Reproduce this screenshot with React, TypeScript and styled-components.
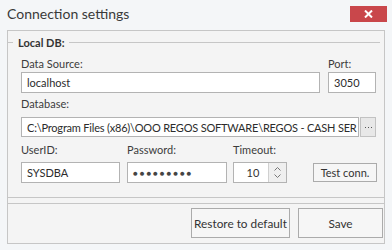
import styled, { createGlobalStyle } from "styled-components";

const GlobalStyle = createGlobalStyle`
  html, body {
    margin: 0;
    padding: 0;
    background: #f4f6f8;
  }
  body {
    font-family: Lato, "Noto Sans", sans-serif;
    font-size: 11px;
    color: #333;
  }
`;

const Window = styled.div`
  width: 392px;
  height: 250px;
  box-sizing: border-box;
  padding: 0 7px 0 7px;
  display: flex;
  flex-direction: column;
`;

const TitleBar = styled.div`
  height: 30px;
  display: flex;
  align-items: flex-start;
  justify-content: space-between;
`;

const Title = styled.div`
  font-size: 14px;
  line-height: 20px;
  margin-top: 4px;
  color: #3a3a3a;
`;

const CloseButton = styled.div`
  width: 37px;
  height: 16px;
  margin-top: 6px;
  margin-right: -2px;
  background: #c9474b;
  display: flex;
  align-items: center;
  justify-content: center;
`;

const Panel = styled.div`
  border: 1px solid #c6c6c6;
  background: #f4f4f4;
  height: 214px;
  box-sizing: border-box;
  display: flex;
  flex-direction: column;
`;

const Group = styled.div`
  border-bottom: 1px solid #c6c6c6;
  padding: 3px 7px 14px 13px;
`;

const Caption = styled.div`
  display: flex;
  align-items: center;
  height: 16px;
  margin-left: -13px;
  margin-right: -3px;
  gap: 5px;
  font-weight: 700;
  color: #333;
  &::before {
    content: "";
    width: 5px;
    height: 1px;
    background: #c6c6c6;
  }
  &::after {
    content: "";
    flex: 1;
    height: 1px;
    background: #c6c6c6;
  }
`;

const Row = styled.div<{ $top: number }>`
  display: flex;
  align-items: flex-end;
  margin-top: ${(p) => p.$top}px;
`;

const Field = styled.div<{ $w: number; $gap: number; $ml?: number }>`
  display: flex;
  flex-direction: column;
  gap: ${(p) => p.$gap}px;
  width: ${(p) => p.$w}px;
  margin-left: ${(p) => p.$ml ?? 0}px;
`;

const Label = styled.div`
  line-height: 16px;
  color: #3c3c3c;
  white-space: nowrap;
`;

const Box = styled.div<{ $h?: number; $w?: number; $tight?: boolean }>`
  height: ${(p) => p.$h ?? 21}px;
  ${(p) => (p.$w ? `width: ${p.$w}px;` : "")}
  box-sizing: border-box;
  border: 1px solid #b3b3b3;
  background: #fff;
  display: flex;
  align-items: center;
  padding-left: 5px;
  overflow: hidden;
  white-space: nowrap;
  color: #2c2c2c;
  letter-spacing: ${(p) => (p.$tight ? "-0.2px" : "normal")};
`;

const Caret = styled.span`
  display: inline-block;
  flex: none;
  width: 1px;
  height: 13px;
  background: #111;
  margin-left: 1px;
`;

const Dots = styled.span`
  font-size: 8px;
  letter-spacing: 1.9px;
  color: #444;
`;

const Ellipsis = styled.div`
  width: 16px;
  height: 20px;
  margin-left: 1px;
  box-sizing: border-box;
  border: 1px solid #c2c2c2;
  background: #e8e8e8;
  display: flex;
  align-items: center;
  justify-content: center;
  gap: 2px;
  & span {
    width: 1px;
    height: 1px;
    background: #555;
  }
`;

const Spin = styled.div`
  height: 21px;
  width: 54px;
  box-sizing: border-box;
  border: 1px solid #b3b3b3;
  background: #fff;
  display: flex;
`;

const SpinValue = styled.div`
  flex: 1;
  display: flex;
  align-items: center;
  justify-content: center;
  padding-left: 4px;
`;

const SpinButtons = styled.div`
  width: 17px;
  border-left: 1px solid #d0d0d0;
  background: #efefef;
  display: flex;
  flex-direction: column;
  align-items: center;
  justify-content: center;
  gap: 3px;
`;

const Button = styled.div<{ $w: number; $h: number }>`
  width: ${(p) => p.$w}px;
  height: ${(p) => p.$h}px;
  box-sizing: border-box;
  border: 1px solid #ababab;
  background: #f6f6f6;
  display: flex;
  align-items: center;
  justify-content: center;
  color: #333;
  white-space: nowrap;
`;

const TestButton = styled(Button)`
  margin-left: 26px;
  margin-bottom: 1px;
`;

const ButtonBar = styled.div`
  margin-top: 5px;
  border-top: 1px solid #c6c6c6;
  padding: 4px 1px 0 0;
  display: flex;
  justify-content: flex-end;
  gap: 8px;
  font-size: 11.8px;
`;

export default function App() {
  return (
    <>
      <GlobalStyle />
      <Window>
        <TitleBar>
          <Title>Connection settings</Title>
          <CloseButton>
            <svg width="9" height="8" viewBox="0 0 9 8">
              <path d="M1 0.5 L8 7.5 M8 0.5 L1 7.5" stroke="#fff" strokeWidth="2" />
            </svg>
          </CloseButton>
        </TitleBar>
        <Panel>
          <Group>
            <Caption>Local DB:</Caption>
            <Row $top={6}>
              <Field $w={299} $gap={0}>
                <Label>Data Source:</Label>
                <Box>localhost</Box>
              </Field>
              <Field $w={48} $gap={0} $ml={8}>
                <Label>Port:</Label>
                <Box>3050</Box>
              </Field>
            </Row>
            <Row $top={3}>
              <Field $w={355} $gap={5}>
                <Label>Database:</Label>
                <Row $top={0}>
                  <Box $h={20} $w={339} $tight>
                    C:\Program Files (x86)\OOO REGOS SOFTWARE\REGOS - CASH SER
                    <Caret />
                  </Box>
                  <Ellipsis>
                    <span />
                    <span />
                    <span />
                  </Ellipsis>
                </Row>
              </Field>
            </Row>
            <Row $top={5}>
              <Field $w={99} $gap={4}>
                <Label>UserID:</Label>
                <Box>SYSDBA</Box>
              </Field>
              <Field $w={100} $gap={4} $ml={7}>
                <Label>Password:</Label>
                <Box>
                  <Dots>●●●●●●●●●</Dots>
                </Box>
              </Field>
              <Field $w={54} $gap={4} $ml={6}>
                <Label>Timeout:</Label>
                <Spin>
                  <SpinValue>10</SpinValue>
                  <SpinButtons>
                    <svg width="7" height="4" viewBox="0 0 7 4">
                      <path d="M0.5 3.5 L3.5 0.5 L6.5 3.5" stroke="#777" fill="none" />
                    </svg>
                    <svg width="7" height="4" viewBox="0 0 7 4">
                      <path d="M0.5 0.5 L3.5 3.5 L6.5 0.5" stroke="#777" fill="none" />
                    </svg>
                  </SpinButtons>
                </Spin>
              </Field>
              <TestButton $w={64} $h={19}>
                Test conn.
              </TestButton>
            </Row>
          </Group>
          <ButtonBar>
            <Button $w={99} $h={30}>Restore to default</Button>
            <Button $w={85} $h={30}>Save</Button>
          </ButtonBar>
        </Panel>
      </Window>
    </>
  );
}
